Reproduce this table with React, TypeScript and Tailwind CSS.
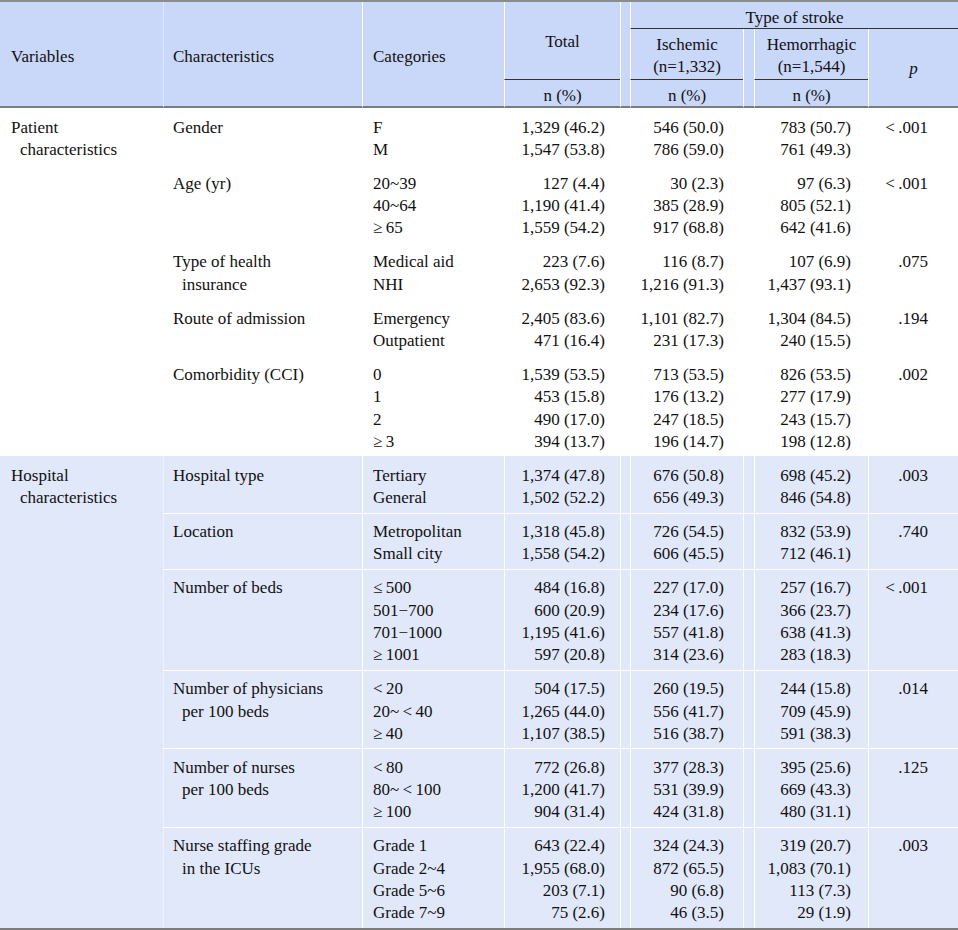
import React from "react";

type Group = {
  ch: string[];
  cats: string[];
  total: string[];
  isc: string[];
  hem: string[];
  p: string;
};

const section1: Group[] = [
  { ch: ["Gender"], cats: ["F", "M"], total: ["1,329 (46.2)", "1,547 (53.8)"], isc: ["546 (50.0)", "786 (59.0)"], hem: ["783 (50.7)", "761 (49.3)"], p: "<\u2009.001" },
  { ch: ["Age (yr)"], cats: ["20~39", "40~64", "≥\u200965"], total: ["127 (4.4)", "1,190 (41.4)", "1,559 (54.2)"], isc: ["30 (2.3)", "385 (28.9)", "917 (68.8)"], hem: ["97 (6.3)", "805 (52.1)", "642 (41.6)"], p: "<\u2009.001" },
  { ch: ["Type of health", "insurance"], cats: ["Medical aid", "NHI"], total: ["223 (7.6)", "2,653 (92.3)"], isc: ["116 (8.7)", "1,216 (91.3)"], hem: ["107 (6.9)", "1,437 (93.1)"], p: ".075" },
  { ch: ["Route of admission"], cats: ["Emergency", "Outpatient"], total: ["2,405 (83.6)", "471 (16.4)"], isc: ["1,101 (82.7)", "231 (17.3)"], hem: ["1,304 (84.5)", "240 (15.5)"], p: ".194" },
  { ch: ["Comorbidity (CCI)"], cats: ["0", "1", "2", "≥\u20093"], total: ["1,539 (53.5)", "453 (15.8)", "490 (17.0)", "394 (13.7)"], isc: ["713 (53.5)", "176 (13.2)", "247 (18.5)", "196 (14.7)"], hem: ["826 (53.5)", "277 (17.9)", "243 (15.7)", "198 (12.8)"], p: ".002" },
];

const section2: Group[] = [
  { ch: ["Hospital type"], cats: ["Tertiary", "General"], total: ["1,374 (47.8)", "1,502 (52.2)"], isc: ["676 (50.8)", "656 (49.3)"], hem: ["698 (45.2)", "846 (54.8)"], p: ".003" },
  { ch: ["Location"], cats: ["Metropolitan", "Small city"], total: ["1,318 (45.8)", "1,558 (54.2)"], isc: ["726 (54.5)", "606 (45.5)"], hem: ["832 (53.9)", "712 (46.1)"], p: ".740" },
  { ch: ["Number of beds"], cats: ["≤\u2009500", "501−700", "701−1000", "≥\u20091001"], total: ["484 (16.8)", "600 (20.9)", "1,195 (41.6)", "597 (20.8)"], isc: ["227 (17.0)", "234 (17.6)", "557 (41.8)", "314 (23.6)"], hem: ["257 (16.7)", "366 (23.7)", "638 (41.3)", "283 (18.3)"], p: "<\u2009.001" },
  { ch: ["Number of physicians", "per 100 beds"], cats: ["<\u200920", "20~\u2009<\u200940", "≥\u200940"], total: ["504 (17.5)", "1,265 (44.0)", "1,107 (38.5)"], isc: ["260 (19.5)", "556 (41.7)", "516 (38.7)"], hem: ["244 (15.8)", "709 (45.9)", "591 (38.3)"], p: ".014" },
  { ch: ["Number of nurses", "per 100 beds"], cats: ["<\u200980", "80~\u2009<\u2009100", "≥\u2009100"], total: ["772 (26.8)", "1,200 (41.7)", "904 (31.4)"], isc: ["377 (28.3)", "531 (39.9)", "424 (31.8)"], hem: ["395 (25.6)", "669 (43.3)", "480 (31.1)"], p: ".125" },
  { ch: ["Nurse staffing grade", "in the ICUs"], cats: ["Grade 1", "Grade 2~4", "Grade 5~6", "Grade 7~9"], total: ["643 (22.4)", "1,955 (68.0)", "203 (7.1)", "75 (2.6)"], isc: ["324 (24.3)", "872 (65.5)", "90 (6.8)", "46 (3.5)"], hem: ["319 (20.7)", "1,083 (70.1)", "113 (7.3)", "29 (1.9)"], p: ".003" },
];

function Lines({ items, indent }: { items: string[]; indent?: boolean }) {
  return (
    <>
      {items.map((t, i) => (
        <div key={i} className={indent && i > 0 ? "pl-[9px] whitespace-nowrap" : "whitespace-nowrap"}>
          {t}
        </div>
      ))}
    </>
  );
}

function Section({ groups, label, blue }: { groups: Group[]; label: string[]; blue: boolean }) {
  const bg = blue ? "bg-[#e1e8fa]" : "bg-white";
  return (
    <tbody className={bg}>
      {groups.map((g, i) => {
        const pad = blue && i > 0 ? "pt-[7.5px] border-t border-t-white" : "pt-[8.5px]";
        const cell = `align-top pb-[3.2px] ${pad} border-l border-l-white`;
        return (
          <tr key={i}>
            {i === 0 && (
              <td rowSpan={groups.length} className="align-top pt-[8.5px] pl-[11px]">
                <Lines items={label} indent />
              </td>
            )}
            <td className={`${cell} pl-[9px] border-l-white/40`}>
              <Lines items={g.ch} indent />
            </td>
            <td className={`${cell} pl-[10px]`}>
              <Lines items={g.cats} />
            </td>
            <td className={`${cell} text-right pr-[15px]`}>
              <Lines items={g.total} />
            </td>
            <td className={cell}></td>
            <td className={`${cell} text-right pr-[19px]`}>
              <Lines items={g.isc} />
            </td>
            <td className={cell}></td>
            <td className={`${cell} text-right pr-[17px]`}>
              <Lines items={g.hem} />
            </td>
            <td className={`${cell} text-right pr-[30px]`}>
              <Lines items={[g.p]} />
            </td>
          </tr>
        );
      })}
    </tbody>
  );
}

export default function App() {
  const hcell = "border-l border-l-white align-middle";
  return (
    <div className="w-[958px] bg-white font-['Liberation_Serif','Times_New_Roman',serif] text-[17px] leading-[22.3px] text-[#111]">
      <table className="w-[958px] table-fixed border-separate border-spacing-0 border-t-2 border-t-[#8c8c8c] border-b-2 border-b-[#7c7c7c]">
        <colgroup>
          <col className="w-[163px]" />
          <col className="w-[199px]" />
          <col className="w-[142px]" />
          <col className="w-[116px]" />
          <col className="w-[10px]" />
          <col className="w-[113px]" />
          <col className="w-[11px]" />
          <col className="w-[114px]" />
          <col className="w-[90px]" />
        </colgroup>
        <thead className="bg-[#c9d7f8]">
          <tr className="h-[27px]">
            <th rowSpan={3} className="border-b-2 border-b-[#7c7c7c] text-left font-normal pl-[11px] pt-[6px] pb-0 align-middle">
              Variables
            </th>
            <th rowSpan={3} className="border-b-2 border-b-[#7c7c7c] border-l border-l-white/40 text-left font-normal pl-[9px] pt-[6px] pb-0 align-middle">
              Characteristics
            </th>
            <th rowSpan={3} className={`${hcell} border-b-2 border-b-[#7c7c7c] text-left font-normal pl-[10px] pt-[6px] pb-0`}>
              Categories
            </th>
            <th rowSpan={2} className={`${hcell} border-b border-b-[#333] font-normal text-center pt-[4px] pb-0`}>
              Total
            </th>
            <th rowSpan={3} className={`${hcell} border-b-2 border-b-[#7c7c7c]`}></th>
            <th colSpan={4} className={`${hcell} border-b border-b-[#333] font-normal text-center leading-[20px] pt-[6px] pb-0`}>
              Type of stroke
            </th>
          </tr>
          <tr className="h-[51px]">
            <th className={`${hcell} border-b border-b-[#333] font-normal text-center leading-[22px] pt-[4px] pb-0`}>
              <div>Ischemic</div>
              <div>(n=1,332)</div>
            </th>
            <th rowSpan={2} className={`${hcell} border-b-2 border-b-[#7c7c7c]`}></th>
            <th className={`${hcell} border-b border-b-[#333] font-normal text-center leading-[22px] pt-[4px] pb-0`}>
              <div>Hemorrhagic</div>
              <div>(n=1,544)</div>
            </th>
            <th rowSpan={2} className={`${hcell} border-b-2 border-b-[#7c7c7c] font-normal italic text-center pt-[4px] pb-0`}>
              p
            </th>
          </tr>
          <tr className="h-[27px]">
            <th className={`${hcell} border-b-2 border-b-[#7c7c7c] font-normal text-center leading-[20px] pt-[6px] pb-0`}>n (%)</th>
            <th className={`${hcell} border-b-2 border-b-[#7c7c7c] font-normal text-center leading-[20px] pt-[6px] pb-0`}>n (%)</th>
            <th className={`${hcell} border-b-2 border-b-[#7c7c7c] font-normal text-center leading-[20px] pt-[6px] pb-0`}>n (%)</th>
          </tr>
        </thead>
        <Section groups={section1} label={["Patient", "characteristics"]} blue={false} />
        <Section groups={section2} label={["Hospital", "characteristics"]} blue={true} />
      </table>
    </div>
  );
}
